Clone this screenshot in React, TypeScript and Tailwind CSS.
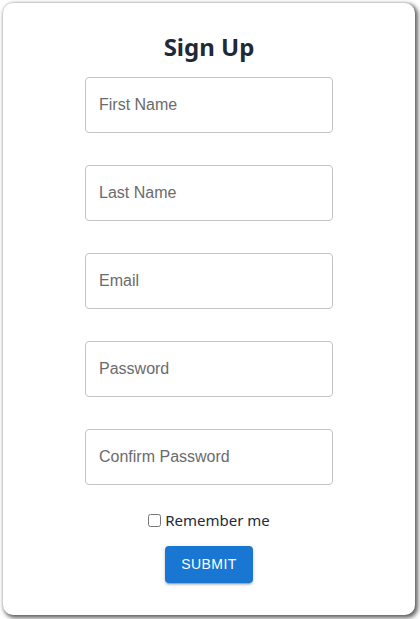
import { useState } from 'react';

const fields = ['First Name', 'Last Name', 'Email', 'Password', 'Confirm Password'];

export default function App() {
  const [remember, setRemember] = useState(false);

  return (
    <div className="min-h-screen bg-white">
      <div className="ml-[3px] pt-[3px]">
        <form
          className="flex h-[612px] w-[412px] flex-col items-center rounded-[10px] bg-white pt-[28px] shadow-[2px_2px_4px_1px_rgba(0,0,0,0.6),0_0_3px_rgba(0,0,0,0.15)]"
          onSubmit={(e) => e.preventDefault()}
        >
          <h1 className="mb-[14px] h-[32px] text-[24px] font-bold leading-[32px] text-[#1e2a3a] [font-family:'Noto_Sans',sans-serif]">
            Sign Up
          </h1>

          <div className="flex flex-col gap-[32px]">
            {fields.map((f) => (
              <input
                key={f}
                type={f.includes('Password') ? 'password' : 'text'}
                placeholder={f}
                className="h-[56px] w-[248px] rounded-[4px] border border-[#c4c4c4] px-[13px] text-[16px] text-[#222] outline-none placeholder:text-[#6b6b6b] [font-family:'Liberation_Sans',Arial,sans-serif]"
              />
            ))}
          </div>

          <label className="mt-[25px] flex h-[20px] items-center text-[15px] text-[#1e2a3a] [font-family:'Noto_Sans',sans-serif]">
            <input
              type="checkbox"
              checked={remember}
              onChange={(e) => setRemember(e.target.checked)}
              className="mr-[4px] h-[13px] w-[13px]"
            />
            Remember me
          </label>

          <button
            type="submit"
            className="mt-[16px] h-[37px] rounded-[4px] bg-[#1976d2] px-[16px] text-[14px] font-medium uppercase tracking-[0.4px] text-white shadow-[0_3px_1px_-2px_rgba(0,0,0,0.2),0_2px_2px_0_rgba(0,0,0,0.14),0_1px_5px_0_rgba(0,0,0,0.12)] [font-family:'Liberation_Sans',Arial,sans-serif]"
          >
            Submit
          </button>
        </form>
      </div>
    </div>
  );
}
